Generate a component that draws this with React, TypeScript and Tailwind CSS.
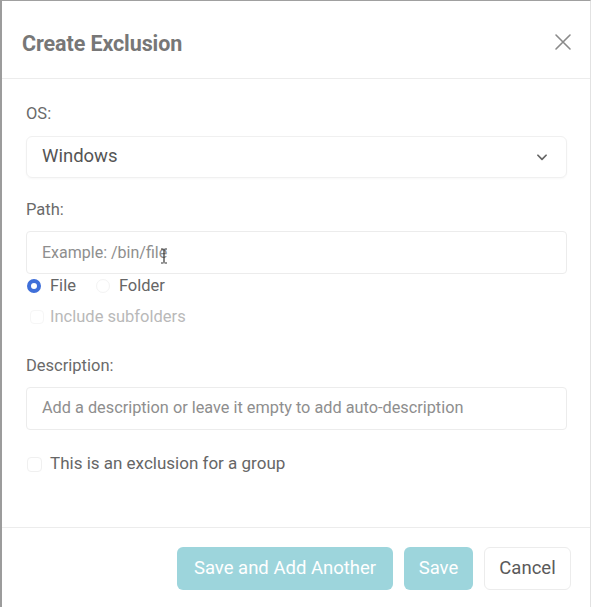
import React from 'react';

const ChevronDown = () => (
  <svg width="14" height="14" viewBox="0 0 24 24" fill="none" stroke="#666" strokeWidth="3" strokeLinecap="round" strokeLinejoin="round">
    <path d="M5 9l7 7 7-7" />
  </svg>
);

const CloseIcon = () => (
  <svg width="18" height="18" viewBox="0 0 18 18" fill="none" stroke="#8a8a8a" strokeWidth="1.6" strokeLinecap="round">
    <path d="M2 2l14 14M16 2L2 16" />
  </svg>
);

// mouse text cursor hovering over the path field
const IBeam = () => (
  <svg width="8" height="16" viewBox="0 0 8 16" fill="none" stroke="#333" strokeWidth="1.2">
    <path d="M1 1h2.5M4.5 1H7M4 1.5v13M1 15h2.5M4.5 15H7" />
  </svg>
);

const App: React.FC = () => {
  return (
    <div
      className="w-[591px] h-[607px] bg-white border-l-2 border-t border-r border-l-[#9c9c9c] border-t-[#a0a0a0] border-r-[#e2e2e2] flex flex-col"
      style={{ fontFamily: 'Roboto, "Noto Sans", Arial, sans-serif' }}
    >
      {/* header */}
      <div className="h-[78px] pt-[10px] pl-5 pr-[18px] flex items-center justify-between border-b border-[#ececec]">
        <h2 className="text-[21.5px] font-bold text-[#777] tracking-[-0.1px]">Create Exclusion</h2>
        <button className="mt-[-6px]">
          <CloseIcon />
        </button>
      </div>

      {/* body */}
      <div className="flex-1 pl-6 pr-[23px] pt-[25px]">
        <div className="text-[16.5px] leading-5 text-[#6a6a6a]">OS:</div>
        <div className="mt-3 h-[42px] rounded-md border border-[#f0f0f0] shadow-[0_1px_2px_rgba(0,0,0,0.03)] flex items-center justify-between pl-[15px] pr-[17px]">
          <span className="text-[18.5px] text-[#555]">Windows</span>
          <ChevronDown />
        </div>

        <div className="mt-[22px] text-[16.5px] leading-5 text-[#6a6a6a]">Path:</div>
        <div className="relative mt-[11px] h-[43px] rounded-sm border border-[#ececec] flex items-center pl-[15px]">
          <span className="text-[16px] text-[#8e8e8e]">Example: /bin/file</span>
          <span className="absolute left-[133px] top-[16px]">
            <IBeam />
          </span>
        </div>

        <div className="mt-[2px] h-5 flex items-center">
          <span className="w-[14px] h-[14px] ml-[1px] rounded-full border-[4px] border-[#3f6fd9] bg-white" />
          <span className="ml-[9px] text-[16.5px] text-[#666]">File</span>
          <span className="ml-[20px] w-[14px] h-[14px] rounded-full border border-[#f3f3f3]" />
          <span className="ml-[9px] text-[16.5px] text-[#666]">Folder</span>
        </div>

        <div className="mt-[11px] h-5 flex items-center">
          <span className="w-[14px] h-[14px] ml-[4px] rounded-sm border border-[#f6f6f6]" />
          <span className="ml-[6px] text-[16.5px] text-[#b9b9b9]">Include subfolders</span>
        </div>

        <div className="mt-[29px] text-[16.5px] leading-5 text-[#6a6a6a]">Description:</div>
        <div className="mt-[11px] h-[43px] rounded-sm border border-[#ececec] flex items-center pl-[15px]">
          <span className="text-[16.3px] text-[#8e8e8e]">Add a description or leave it empty to add auto-description</span>
        </div>

        <div className="mt-[24px] h-5 flex items-center">
          <span className="w-[15px] h-[15px] ml-[1px] rounded-sm border border-[#f0f0f0]" />
          <span className="ml-[8px] text-[17px] text-[#666]">This is an exclusion for a group</span>
        </div>
      </div>

      {/* footer */}
      <div className="h-[80px] border-t border-[#ececec] flex items-start justify-end gap-[11px] pt-[19px] pr-[19px]">
        <button className="w-[216px] h-[43px] rounded-md bg-[#9dd5dc] text-white text-[18.5px]">Save and Add Another</button>
        <button className="w-[69px] h-[43px] rounded-md bg-[#9dd5dc] text-white text-[18.5px]">Save</button>
        <button className="w-[87px] h-[43px] rounded-md border border-[#ececec] bg-white text-[#5a5a5a] text-[18.5px]">Cancel</button>
      </div>
    </div>
  );
};

export default App;
